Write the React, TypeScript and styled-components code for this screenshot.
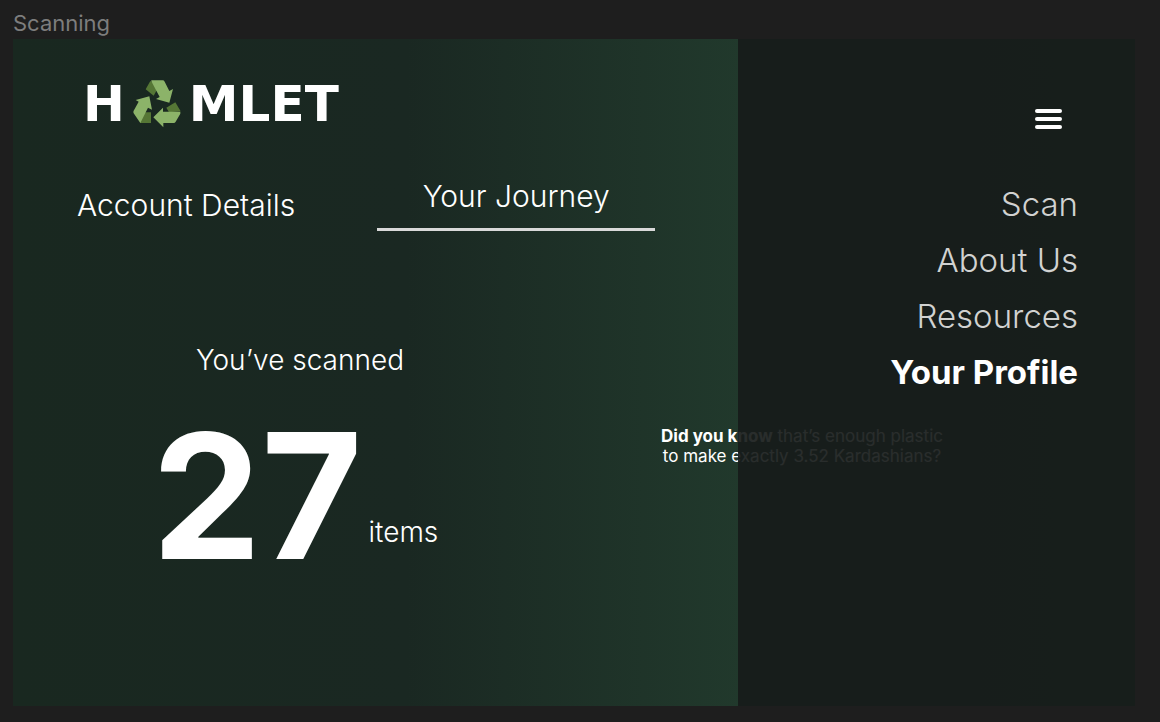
import React from "react";
import styled, { createGlobalStyle } from "styled-components";

const GlobalStyle = createGlobalStyle`
  *, *::before, *::after { box-sizing: border-box; }
  body {
    margin: 0;
    background: #1e1e1e;
    color: #fff;
    font-family: Inter, "Liberation Sans", sans-serif;
  }
  button { font: inherit; color: inherit; background: none; border: 0; padding: 0; cursor: pointer; }
`;

const Page = styled.div`
  min-height: 100vh;
  display: flex;
  flex-direction: column;
  padding: 8px 25px 16px 13px;
`;

const FrameLabel = styled.div`
  font-size: 22px;
  line-height: 31px;
  color: #7d7d7d;
`;

const Frame = styled.div`
  position: relative;
  flex: 1;
  background: linear-gradient(to right, #192820 0%, #1a2822 35%, #21392c 65%, #243e30 100%);
`;

const Content = styled.main`
  padding: 41px 64px;
`;

const Logo = styled.h1`
  display: flex;
  align-items: center;
  gap: 8px;
  margin: 0;
  padding-left: 6px;
  font-family: "DejaVu Sans", Inter, sans-serif;
  font-size: 50px;
  line-height: 48px;
  font-weight: 700;
`;

const RecycleMark = styled.svg`
  width: 48px;
  height: 48px;
`;

const Tabs = styled.div`
  display: flex;
  align-items: center;
  gap: 82px;
  margin-top: 50px;
`;

const Tab = styled.button<{ $active?: boolean }>`
  font-size: 30px;
  line-height: 36px;
  font-weight: 300;
  ${(p) => p.$active && "width: 278px; padding-bottom: 14px; border-bottom: 3px solid #d9d9d9;"}
`;

const Journey = styled.section`
  display: flex;
  align-items: flex-start;
  gap: 138px;
  margin-top: 111px;
`;

const Stats = styled.div`
  flex: 0 0 446px;
  display: flex;
  flex-direction: column;
  align-items: center;
`;

const StatText = styled.span`
  font-size: 28px;
  line-height: 36px;
  font-weight: 300;
`;

const CountRow = styled.div`
  display: flex;
  align-items: flex-end;
  gap: 6px;
  margin-top: 32px;
  padding-right: 10px;
`;

const Count = styled.strong`
  font-size: 174px;
  line-height: 172px;
  font-weight: 700;
`;

const Unit = styled(StatText)`
  padding-bottom: 32px;
`;

const Fact = styled.p`
  flex: none;
  margin: 84px 0 0;
  font-size: 17px;
  line-height: 20px;
  font-weight: 400;
  text-align: center;
`;

const MenuPanel = styled.aside`
  position: absolute;
  top: 0;
  right: 0;
  bottom: 0;
  width: 397px;
  display: flex;
  flex-direction: column;
  align-items: flex-end;
  padding: 68px 57px;
  background: rgba(23, 27, 26, 0.92);
`;

const MenuButton = styled.button`
  display: flex;
  flex-direction: column;
  gap: 4px;
  width: 27px;
  margin-right: 16px;
  padding: 2px 0;
`;

const MenuBar = styled.span`
  height: 4px;
  border-radius: 2px;
  background: #fff;
`;

const Nav = styled.nav`
  display: flex;
  flex-direction: column;
  align-items: flex-end;
  margin-top: 45px;
`;

const NavLink = styled.a<{ $active?: boolean }>`
  font-size: 33px;
  line-height: 56px;
  text-decoration: none;
  color: ${(p) => (p.$active ? "#fff" : "#d1d2d1")};
  font-weight: ${(p) => (p.$active ? 700 : 300)};
`;

const links = ["Scan", "About Us", "Resources", "Your Profile"];

export default function App() {
  return (
    <>
      <GlobalStyle />
      <Page>
        <FrameLabel>Scanning</FrameLabel>
        <Frame>
          <Content>
            <Logo>
              <span>H</span>
              <RecycleMark viewBox="188 44 144 144" role="img" aria-label="A">
                <g fill="#557635">
                  <path d="M240 47 226 72 250 91 265 64Z" />
                  <path d="M214 141H242V173H209Z" />
                  <path d="M288 127 315 111 331 138 296 141Z" />
                </g>
                <g fill="#8cb369">
                  <path d="M243 45H277Q281 45 283 49L297 77 308 71 297 112 257 101 268 95 243 48Z" />
                  <path d="M237 93 245 133 233 127 210 173 190 144Q188 140 190 136L205 109 196 104Z" />
                  <path d="M249 156 278 127V139H330V145L316 169Q314 173 310 173H279V186Z" />
                </g>
              </RecycleMark>
              <span>MLET</span>
            </Logo>
            <Tabs role="tablist">
              <Tab role="tab" aria-selected={false}>Account Details</Tab>
              <Tab role="tab" aria-selected $active>Your Journey</Tab>
            </Tabs>
            <Journey>
              <Stats>
                <StatText>You’ve scanned</StatText>
                <CountRow>
                  <Count>27</Count>
                  <Unit>items</Unit>
                </CountRow>
              </Stats>
              <Fact>
                <b>Did you know</b> that’s enough plastic
                <br />
                to make exactly 3.52 Kardashians?
              </Fact>
            </Journey>
          </Content>
          <MenuPanel>
            <MenuButton aria-label="Menu" aria-expanded>
              <MenuBar />
              <MenuBar />
              <MenuBar />
            </MenuButton>
            <Nav>
              {links.map((name) => (
                <NavLink key={name} href="#" $active={name === "Your Profile"}>
                  {name}
                </NavLink>
              ))}
            </Nav>
          </MenuPanel>
        </Frame>
      </Page>
    </>
  );
}
